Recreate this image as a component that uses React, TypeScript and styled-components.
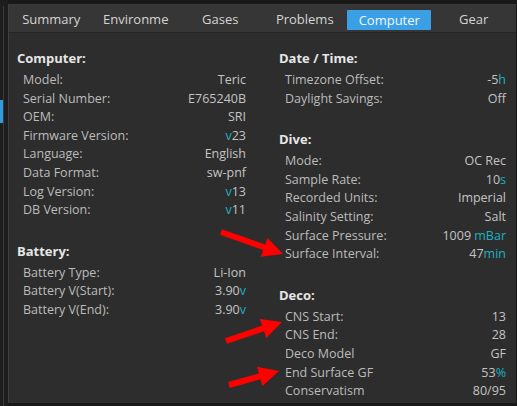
import React from "react";
import styled, { createGlobalStyle } from "styled-components";

const Global = createGlobalStyle`
  html, body { margin: 0; padding: 0; background: #181818; }
  body { font-family: "Open Sans", "Liberation Sans", sans-serif; }
`;

const Screen = styled.div`
  position: relative;
  width: 517px;
  height: 406px;
  display: flex;
  background: #181818;
  overflow: hidden;
`;

const SideStrip = styled.div`
  width: 8px;
  flex: none;
  position: relative;
  background: #1d1d1d;
  display: flex;
  flex-direction: column;
  &::after {
    content: "";
    position: absolute;
    left: 3px;
    top: 6px;
    bottom: 0;
    width: 1px;
    background: #3a3a3a;
  }
`;

const SideMarker = styled.div`
  margin-top: 100px;
  width: 3px;
  height: 23px;
  background: #2f9be0;
  position: relative;
  z-index: 1;
`;

const Panel = styled.div`
  flex: 1;
  margin: 4px 4px 3px 0;
  background: #2d2d2d;
  border-left: 1px solid #404040;
  border-top: 1px solid #3a3a3a;
  display: flex;
  flex-direction: column;
`;

const TabBar = styled.div`
  height: 27px;
  flex: none;
  background: #363636;
  border-bottom: 1px solid #262626;
  display: flex;
  align-items: center;
`;

const Tab = styled.div<{ $active?: boolean }>`
  width: 84.5px;
  flex: none;
  display: flex;
  justify-content: center;
  align-items: center;
  font-size: 13px;
  color: #d4d4d4;
  ${(p) =>
    p.$active &&
    `
    & > span {
      background: #3a9fe4;
      color: #f2f8fd;
      width: 84px;
      height: 20px;
      line-height: 20px;
      text-align: center;
      border-radius: 1px;
      margin-top: 3px;
    }
  `}
`;

const Content = styled.div`
  display: grid;
  grid-template-columns: 229px 227px;
  column-gap: 33px;
  padding: 15px 0 0 8px;
`;

const Column = styled.div`
  display: flex;
  flex-direction: column;
`;

const Section = styled.div`
  display: flex;
  flex-direction: column;
  & + & {
    margin-top: 21px;
  }
`;

const SectionTitle = styled.div`
  height: 20px;
  line-height: 20px;
  margin-bottom: 3px;
  font-size: 13px;
  font-weight: 700;
  color: #e6e6e6;
`;

const Row = styled.div`
  height: 18.6px;
  line-height: 18.6px;
  display: flex;
  justify-content: space-between;
  padding-left: 6px;
  font-size: 12.5px;
  white-space: nowrap;
`;

const Label = styled.span`
  color: #bcbcbc;
`;

const Value = styled.span`
  color: #c4c4c4;
`;

const Accent = styled.span`
  color: #19b2c2;
`;

const Overlay = styled.svg`
  position: absolute;
  left: 0;
  top: 0;
  pointer-events: none;
`;

type Item = { label: string; value: React.ReactNode };

const v = (n: string) => (
  <>
    <Accent>v</Accent>
    {n}
  </>
);
const unit = (n: string, u: string) => (
  <>
    {n}
    <Accent>{u}</Accent>
  </>
);

const leftSections: { title: string; items: Item[] }[] = [
  {
    title: "Computer:",
    items: [
      { label: "Model:", value: "Teric" },
      { label: "Serial Number:", value: "E765240B" },
      { label: "OEM:", value: "SRI" },
      { label: "Firmware Version:", value: v("23") },
      { label: "Language:", value: "English" },
      { label: "Data Format:", value: "sw-pnf" },
      { label: "Log Version:", value: v("13") },
      { label: "DB Version:", value: v("11") },
    ],
  },
  {
    title: "Battery:",
    items: [
      { label: "Battery Type:", value: "Li-Ion" },
      { label: "Battery V(Start):", value: unit("3.90", "v") },
      { label: "Battery V(End):", value: unit("3.90", "v") },
    ],
  },
];

const rightSections: { title: string; items: Item[] }[] = [
  {
    title: "Date / Time:",
    items: [
      { label: "Timezone Offset:", value: unit("-5", "h") },
      { label: "Daylight Savings:", value: "Off" },
    ],
  },
  {
    title: "Dive:",
    items: [
      { label: "Mode:", value: "OC Rec" },
      { label: "Sample Rate:", value: unit("10", "s") },
      { label: "Recorded Units:", value: "Imperial" },
      { label: "Salinity Setting:", value: "Salt" },
      { label: "Surface Pressure:", value: unit("1009 ", "mBar") },
      { label: "Surface Interval:", value: unit("47", "min") },
    ],
  },
  {
    title: "Deco:",
    items: [
      { label: "CNS Start:", value: "13" },
      { label: "CNS End:", value: "28" },
      { label: "Deco Model", value: "GF" },
      { label: "End Surface GF", value: unit("53", "%") },
      { label: "Conservatism", value: "80/95" },
    ],
  },
];

const tabs = ["Summary", "Environme", "Gases", "Problems", "Computer", "Gear"];

function Arrow({ x1, y1, x2, y2 }: { x1: number; y1: number; x2: number; y2: number }) {
  const dx = x2 - x1;
  const dy = y2 - y1;
  const len = Math.hypot(dx, dy);
  const ux = dx / len;
  const uy = dy / len;
  const px = -uy;
  const py = ux;
  const headLen = 20;
  const headHalf = 10;
  const shaft = 3;
  const bx = x2 - ux * headLen;
  const by = y2 - uy * headLen;
  const pts = [
    [x1 + px * shaft, y1 + py * shaft],
    [bx + px * shaft, by + py * shaft],
    [bx + px * headHalf, by + py * headHalf],
    [x2, y2],
    [bx - px * headHalf, by - py * headHalf],
    [bx - px * shaft, by - py * shaft],
    [x1 - px * shaft, y1 - py * shaft],
  ]
    .map((p) => p.map((n) => n.toFixed(1)).join(","))
    .join(" ");
  return <polygon points={pts} fill="#ff0000" />;
}

function SectionList({ sections }: { sections: { title: string; items: Item[] }[] }) {
  return (
    <Column>
      {sections.map((s) => (
        <Section key={s.title}>
          <SectionTitle>{s.title}</SectionTitle>
          {s.items.map((it) => (
            <Row key={it.label}>
              <Label>{it.label}</Label>
              <Value>{it.value}</Value>
            </Row>
          ))}
        </Section>
      ))}
    </Column>
  );
}

export default function App() {
  return (
    <>
      <Global />
      <Screen>
        <SideStrip>
          <SideMarker />
        </SideStrip>
        <Panel>
          <TabBar>
            {tabs.map((t) => (
              <Tab key={t} $active={t === "Computer"}>
                <span>{t}</span>
              </Tab>
            ))}
          </TabBar>
          <Content>
            <SectionList sections={leftSections} />
            <SectionList sections={rightSections} />
          </Content>
        </Panel>
        <Overlay width={517} height={406} viewBox="0 0 517 406">
          <Arrow x1={221} y1={232} x2={283} y2={254} />
          <Arrow x1={226} y1={341} x2={282} y2={322} />
          <Arrow x1={229} y1={385} x2={279} y2={371} />
        </Overlay>
      </Screen>
    </>
  );
}
